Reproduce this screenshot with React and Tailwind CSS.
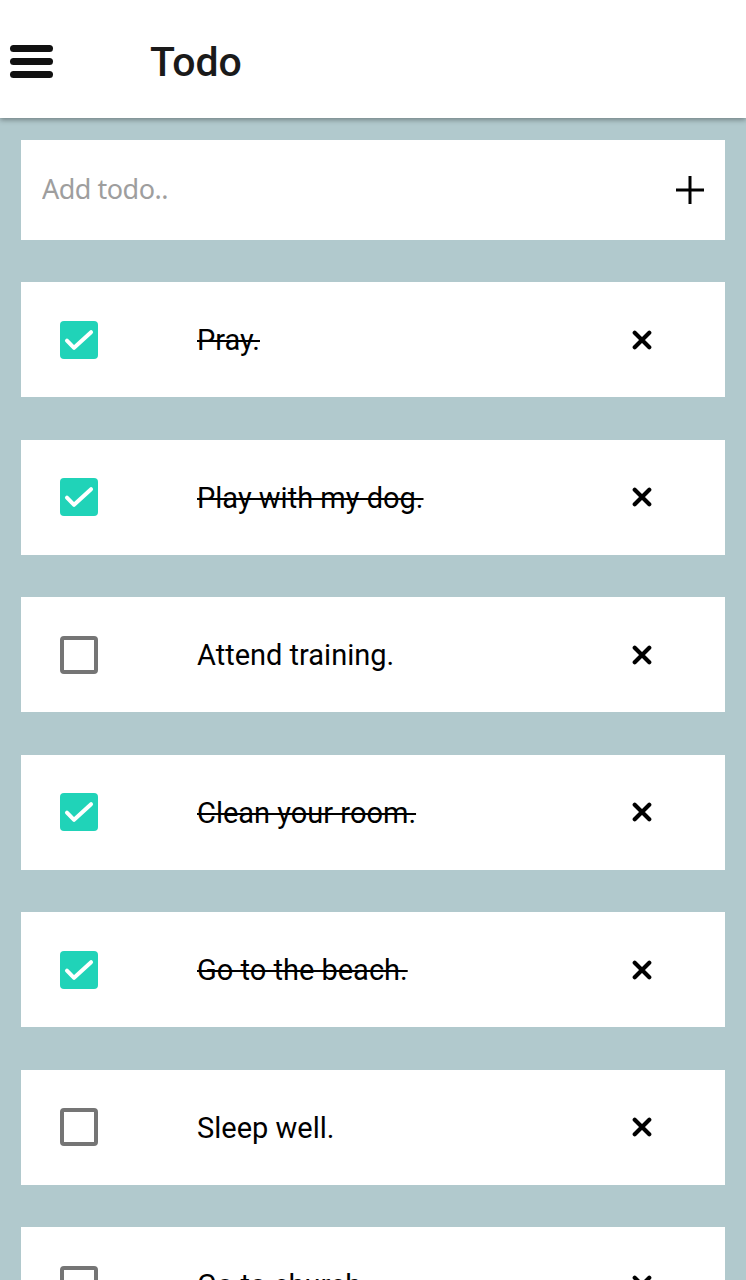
import { useState } from 'react'

const initialTodos = [
  { id: 1, text: 'Pray.', done: true },
  { id: 2, text: 'Play with my dog.', done: true },
  { id: 3, text: 'Attend training.', done: false },
  { id: 4, text: 'Clean your room.', done: true },
  { id: 5, text: 'Go to the beach.', done: true },
  { id: 6, text: 'Sleep well.', done: false },
  { id: 7, text: 'Go to church.', done: false },
]

function Checkbox({ checked, onChange }) {
  return (
    <button
      onClick={onChange}
      className={`w-[38px] h-[38px] rounded-[4px] flex items-center justify-center shrink-0 ${
        checked ? 'bg-[#20d3b8]' : 'border-[4px] border-[#757575] bg-white'
      }`}
    >
      {checked && (
        <svg width="34" height="34" viewBox="0 0 24 24" fill="none" className="shrink-0">
          <path d="M3.5 12.5l5 5L20.5 6.5" stroke="white" strokeWidth="2.8" strokeLinecap="round" strokeLinejoin="round" />
        </svg>
      )}
    </button>
  )
}

function TodoItem({ todo, onToggle, onRemove }) {
  return (
    <div className="bg-white h-[115px] flex items-center shrink-0">
      <div className="w-[176px] pl-[39px]">
        <Checkbox checked={todo.done} onChange={onToggle} />
      </div>
      <span
        className={`flex-1 text-[29px] text-black leading-none mt-[2px] ${todo.done ? 'line-through decoration-[2px]' : ''}`}
      >
        {todo.text}
      </span>
      <button onClick={onRemove} className="w-[40px] h-[40px] mr-[63px] flex items-center justify-center">
        <svg width="20" height="20" viewBox="0 0 22 22" fill="none">
          <path d="M3 3l16 16M19 3L3 19" stroke="black" strokeWidth="4.6" strokeLinecap="round" />
        </svg>
      </button>
    </div>
  )
}

export default function App() {
  const [todos, setTodos] = useState(initialTodos)
  const [text, setText] = useState('')

  const addTodo = () => {
    if (!text.trim()) return
    setTodos([...todos, { id: Date.now(), text: text.trim(), done: false }])
    setText('')
  }

  return (
    <div className="min-h-screen h-[1280px] overflow-hidden bg-[#b1c9cd] font-['Roboto',sans-serif]">
      {/* Header */}
      <header className="relative z-10 h-[118px] bg-white flex items-center shadow-[0_2px_5px_rgba(0,0,0,0.35)]">
        <div className="w-[150px] pl-[10px]">
          <div className="flex flex-col gap-[6px] w-[43px] mt-[5px]">
            <span className="h-[7px] rounded-full bg-[#111]" />
            <span className="h-[7px] rounded-full bg-[#111]" />
            <span className="h-[7px] rounded-full bg-[#111]" />
          </div>
        </div>
        <h1 className="text-[41px] font-medium text-[#1a1a1a] leading-none mt-[6px]">Todo</h1>
      </header>

      <main className="flex flex-col gap-[42.5px] px-[21px] pt-[21.5px]">
        {/* Add todo */}
        <div className="bg-white h-[100px] flex items-center">
          <input
            value={text}
            onChange={(e) => setText(e.target.value)}
            placeholder="Add todo.."
            className="flex-1 pl-[21px] text-[27px] text-black placeholder:text-[#9e9e9e] outline-none bg-transparent font-['Noto_Sans',sans-serif] tracking-[-0.5px]"
          />
          <button onClick={addTodo} className="w-[40px] h-[40px] mr-[15px] flex items-center justify-center">
            <svg width="30" height="30" viewBox="0 0 30 30" fill="none">
              <path d="M15 1v28M1 15h28" stroke="black" strokeWidth="3" />
            </svg>
          </button>
        </div>

        {todos.map((todo) => (
          <TodoItem
            key={todo.id}
            todo={todo}
            onToggle={() => setTodos(todos.map((t) => (t.id === todo.id ? { ...t, done: !t.done } : t)))}
            onRemove={() => setTodos(todos.filter((t) => t.id !== todo.id))}
          />
        ))}
      </main>
    </div>
  )
}
